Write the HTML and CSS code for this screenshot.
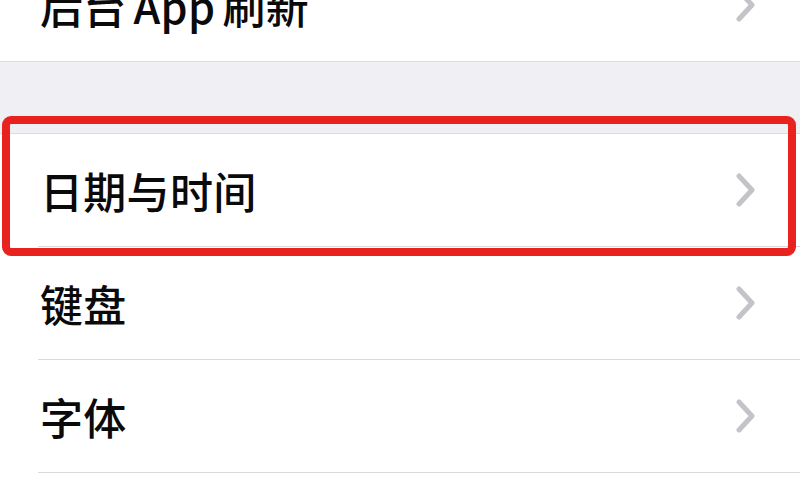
FILE: index.html
```html
<!DOCTYPE html>
<html lang="zh-CN">
<head>
<meta charset="utf-8">
<link rel="stylesheet" href="styles.css">
</head>
<body>
<div class="screen">
  <div class="group group-top">
    <div class="row last">
      <span class="label">后台 App 刷新</span>
      <svg class="chev" viewBox="0 0 20 34"><path d="M3 3 L16 17 L3 31"/></svg>
    </div>
  </div>
  <div class="gap"></div>
  <div class="group">
    <div class="row">
      <span class="label">日期与时间</span>
      <svg class="chev" viewBox="0 0 20 34"><path d="M3 3 L16 17 L3 31"/></svg>
    </div>
    <div class="row">
      <span class="label">键盘</span>
      <svg class="chev" viewBox="0 0 20 34"><path d="M3 3 L16 17 L3 31"/></svg>
    </div>
    <div class="row">
      <span class="label">字体</span>
      <svg class="chev" viewBox="0 0 20 34"><path d="M3 3 L16 17 L3 31"/></svg>
    </div>
  </div>
  <div class="highlight"></div>
</div>
</body>
</html>
```
FILE: styles.css
```css
html, body {
  margin: 0;
  padding: 0;
  background: #ffffff;
}
.screen {
  position: relative;
  width: 800px;
  height: 500px;
  overflow: hidden;
  font-family: "Noto Sans CJK SC", "Noto Sans", sans-serif;
}
.group {
  background: #ffffff;
  padding-left: 38px;
}
.group-top {
  margin-top: -51px;
  border-bottom: 1px solid #dcdce0;
}
.gap {
  height: 71px;
  background: #efeff4;
  border-bottom: 1px solid #dcdce0;
}
.row {
  height: 112px;
  display: flex;
  align-items: center;
  justify-content: space-between;
  padding-right: 44px;
  border-bottom: 1px solid #d9d9dd;
}
.row.last {
  border-bottom: none;
}
.label {
  font-size: 43px;
  font-weight: 500;
  color: #0a0a0a;
  padding-left: 2px;
  letter-spacing: 0.3px;
  word-spacing: -3px;
}
.chev {
  width: 20px;
  height: 34px;
  flex: none;
}
.chev path {
  fill: none;
  stroke: #c3c3c8;
  stroke-width: 5;
  stroke-linecap: round;
  stroke-linejoin: round;
}
.highlight {
  position: absolute;
  left: 2px;
  top: 116px;
  width: 778px;
  height: 124px;
  border: 8px solid #e8221e;
  border-radius: 9px;
}
```
